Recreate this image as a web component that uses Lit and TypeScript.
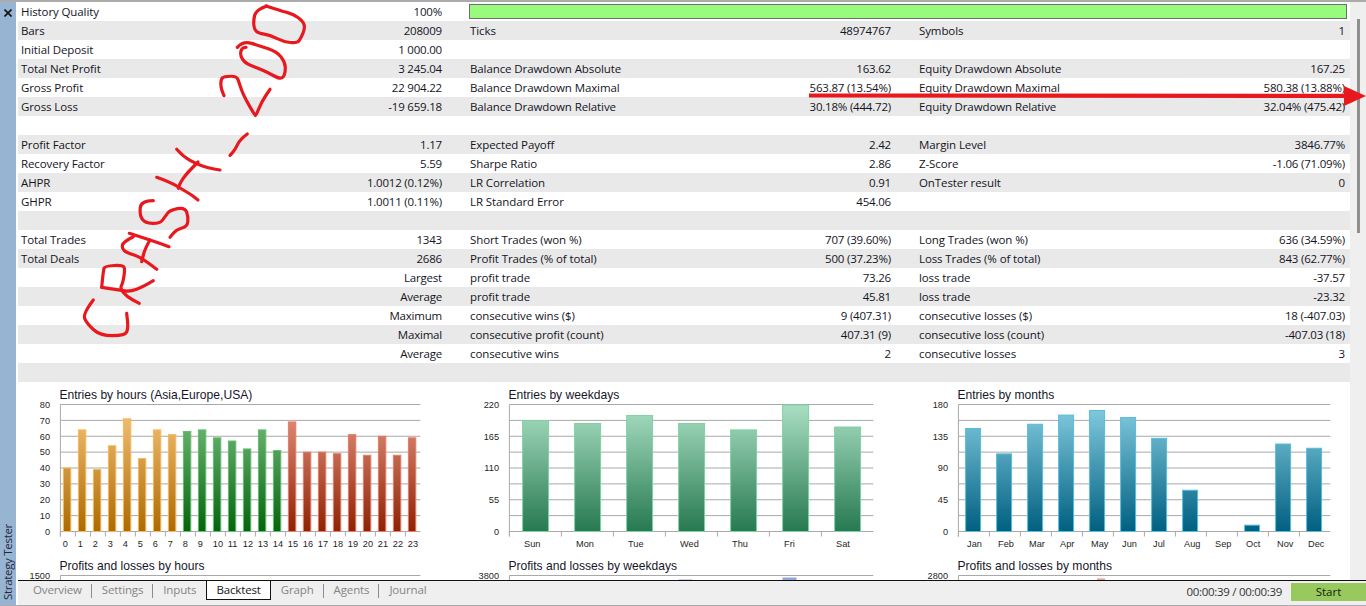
import { LitElement, html, css, svg } from "lit";
import { customElement } from "lit/decorators.js";

type Cell = [string, string];
const E: Cell = ["", ""];
const ROWS: Cell[][] = [
  [["History Quality", "100%"]],
  [["Bars", "208009"], ["Ticks", "48974767"], ["Symbols", "1"]],
  [["Initial Deposit", "1 000.00"], E, E],
  [["Total Net Profit", "3 245.04"], ["Balance Drawdown Absolute", "163.62"], ["Equity Drawdown Absolute", "167.25"]],
  [["Gross Profit", "22 904.22"], ["Balance Drawdown Maximal", "563.87 (13.54%)"], ["Equity Drawdown Maximal", "580.38 (13.88%)"]],
  [["Gross Loss", "-19 659.18"], ["Balance Drawdown Relative", "30.18% (444.72)"], ["Equity Drawdown Relative", "32.04% (475.42)"]],
  [E, E, E],
  [["Profit Factor", "1.17"], ["Expected Payoff", "2.42"], ["Margin Level", "3846.77%"]],
  [["Recovery Factor", "5.59"], ["Sharpe Ratio", "2.86"], ["Z-Score", "-1.06 (71.09%)"]],
  [["AHPR", "1.0012 (0.12%)"], ["LR Correlation", "0.91"], ["OnTester result", "0"]],
  [["GHPR", "1.0011 (0.11%)"], ["LR Standard Error", "454.06"], E],
  [E, E, E],
  [["Total Trades", "1343"], ["Short Trades (won %)", "707 (39.60%)"], ["Long Trades (won %)", "636 (34.59%)"]],
  [["Total Deals", "2686"], ["Profit Trades (% of total)", "500 (37.23%)"], ["Loss Trades (% of total)", "843 (62.77%)"]],
  [["", "Largest"], ["profit trade", "73.26"], ["loss trade", "-37.57"]],
  [["", "Average"], ["profit trade", "45.81"], ["loss trade", "-23.32"]],
  [["", "Maximum"], ["consecutive wins ($)", "9 (407.31)"], ["consecutive losses ($)", "18 (-407.03)"]],
  [["", "Maximal"], ["consecutive profit (count)", "407.31 (9)"], ["consecutive loss (count)", "-407.03 (18)"]],
  [["", "Average"], ["consecutive wins", "2"], ["consecutive losses", "3"]],
  [E, E, E],
];

interface Tone { top: string; bottom: string; edge: string }
const ORANGE: Tone = { top: "#f6c57c", bottom: "#ad6a00", edge: "#f8b75a" };
const GREEN: Tone = { top: "#7cc184", bottom: "#05640c", edge: "#63bd72" };
const RED: Tone = { top: "#e59683", bottom: "#8e2204", edge: "#e87a66" };
const SEA: Tone = { top: "#aadfc4", bottom: "#267950", edge: "#7fd2a4" };
const TEAL: Tone = { top: "#85cde0", bottom: "#005f80", edge: "#55bedc" };

interface Chart {
  title: string; title2: string; ymax: number; ymax2: string; labels: (string | number)[];
  steps: (string | null)[]; values: number[]; width: number; barW: number; barX: number; labelX: number; tone: (i: number) => Tone;
  stubs: { x: number; w: number; y: number; fill: string }[];
}

const CHARTS: Chart[] = [
  {
    title: "Entries by hours (Asia,Europe,USA)", title2: "Profits and losses by hours", ymax: 80, ymax2: "1500",
    labels: Array.from({ length: 24 }, (_, i) => i),
    steps: ["80", "70", "60", "50", "40", "30", "20", "10", "0"],
    values: [40, 64, 39, 54, 71, 46, 64, 61, 63, 64, 59, 57, 52, 64, 51, 69, 50, 50, 49, 61, 48, 60, 48, 59],
    width: 15, barW: 7.4, barX: 3, labelX: 2.4,
    tone: (i) => (i < 8 ? ORANGE : i < 15 ? GREEN : RED), stubs: [],
  },
  {
    title: "Entries by weekdays", title2: "Profits and losses by weekdays", ymax: 220, ymax2: "3800",
    labels: ["Sun", "Mon", "Tue", "Wed", "Thu", "Fri", "Sat"],
    steps: ["220", null, "165", null, "110", null, "55", null, "0"],
    values: [192, 187, 201, 187, 176, 219, 181],
    width: 52, barW: 26, barX: 13.2, labelX: 14.7,
    tone: () => SEA,
    stubs: [{ x: 211.5, w: 14, y: 197.5, fill: "#8fa8dc" }, { x: 315.5, w: 14, y: 195.5, fill: "#8fa8dc" }],
  },
  {
    title: "Entries by months", title2: "Profits and losses by months", ymax: 180, ymax2: "2800",
    labels: ["Jan", "Feb", "Mar", "Apr", "May", "Jun", "Jul", "Aug", "Sep", "Oct", "Nov", "Dec"],
    steps: ["180", null, "135", null, "90", null, "45", null, "0"],
    values: [146, 110, 152, 165, 171.5, 161.5, 132, 58.5, 0, 9, 124, 118],
    width: 31, barW: 15, barX: 7.2, labelX: 8.7,
    tone: () => TEAL,
    stubs: [{ x: 181, w: 8, y: 196.5, fill: "#ef9c8a" }],
  },
];

const X0 = 42.4, TOP = 22.5, BOTTOM = 149.5;

function chartSvg(c: Chart, idx: number) {
  const n = c.labels.length;
  const xEnd = X0 + c.width * n;
  const yOf = (v: number) => BOTTOM - (v / c.ymax) * (BOTTOM - TOP);
  const tones = Array.from(new Set(c.values.map((_, i) => c.tone(i))));
  const gid = (t: Tone) => `g${idx}-${tones.indexOf(t)}`;
  return svg`
    <svg class="plot" width="449" height="198" viewBox="0 0 449 198">
      <defs>
        ${tones.map((t) => svg`<linearGradient id=${gid(t)} gradientUnits="userSpaceOnUse" x1="0" x2="0" y1=${TOP} y2=${BOTTOM}>
          <stop offset="0" stop-color=${t.top}></stop><stop offset="1" stop-color=${t.bottom}></stop>
        </linearGradient>`)}
      </defs>
      <text class="title" x=${X0 - 1} y="17">${c.title}</text>
      ${c.steps.map((s, i) => {
        const y = TOP + (i * (BOTTOM - TOP)) / 8;
        return svg`<line class="grid" x1=${X0} x2=${xEnd} y1=${y} y2=${y}></line>
          ${s === null ? "" : svg`<text class="ylab" x="32" y=${y + 3.3}>${s}</text>`}`;
      })}
      <line class="grid" x1=${X0} x2=${X0} y1=${TOP} y2=${BOTTOM + 5}></line>
      ${c.labels.map((l, i) => {
        const x = X0 + c.width * i;
        return svg`<line class="grid" x1=${x} x2=${x} y1=${BOTTOM} y2=${BOTTOM + 5}></line>
          <text class="xlab" x=${x + c.labelX} y=${BOTTOM + 15}>${l}</text>`;
      })}
      ${c.values.map((v, i) => {
        if (v === 0) return "";
        const t = c.tone(i);
        const y = yOf(v);
        return svg`<rect x=${X0 + c.width * i + c.barX} y=${y} width=${c.barW} height=${BOTTOM - y}
          fill=${`url(#${gid(t)})`} stroke=${t.edge} stroke-width="1"></rect>`;
      })}
      <text class="title" x=${X0 - 1} y="188">${c.title2}</text>
      <text class="ylab" x="32" y="196.6">${c.ymax2}</text>
      <line class="grid" x1=${X0} x2=${xEnd} y1="193.5" y2="193.5"></line>
      <line class="grid" x1=${X0} x2=${X0} y1="193.5" y2="198"></line>
      ${c.stubs.map((s) => svg`<rect x=${s.x + X0 - 42.4} y=${s.y} width=${s.w} height=${198 - s.y} fill=${s.fill}></rect>`)}
    </svg>`;
}

function smooth(p: number[][]): string {
  let d = `M${p[0][0]} ${p[0][1]}`;
  for (let i = 1; i < p.length - 1; i++) {
    const mx = (p[i][0] + p[i + 1][0]) / 2;
    const my = (p[i][1] + p[i + 1][1]) / 2;
    d += ` Q${p[i][0]} ${p[i][1]} ${mx} ${my}`;
  }
  const l = p[p.length - 1];
  return d + ` L${l[0]} ${l[1]}`;
}

const STROKES: number[][][] = [
  [[266.7, 6], [256, 10], [253.5, 20], [254, 29], [258.3, 33.3], [270, 35], [283.3, 41.7], [297.3, 43.3], [301, 38], [305, 28.3], [303.3, 21.7], [293.3, 14], [283.3, 11.7], [266, 6]],
  [[237.3, 47.3], [243.3, 40.7], [260, 46], [276.7, 51.7], [285, 61.7], [285.5, 72], [283, 78], [278.3, 78.3], [268.3, 72.7], [258.3, 68.3], [245, 63.3], [240, 55], [241.7, 48.3], [246, 47.3]],
  [[224, 95.7], [220.7, 88.3], [221, 79], [224, 76.5], [236.7, 76], [239.3, 83.3], [243.3, 95], [255, 115.7], [256, 115.7], [261.7, 101.7], [270, 89.3]],
  [[247.3, 134], [240, 139.3], [235, 150], [230, 155.3]],
  [[176.7, 149.3], [183.3, 156.7], [196.7, 164], [208.3, 168], [220, 170]],
  [[198, 162], [186.7, 173.3], [180, 183], [178.3, 188.3]],
  [[156.7, 177.3], [170, 182], [185, 191], [191.7, 195], [198, 200]],
  [[153.3, 200.7], [141, 200.7], [139.5, 215], [145, 223.3], [160, 223.5], [165, 216.7], [170, 210], [185, 207.3], [188.3, 216.7], [187.3, 226.7], [176.7, 229.3], [170, 237.3]],
  [[129.3, 233.3], [150, 240], [169, 246.7]],
  [[133.3, 236.7], [123.3, 241.7], [121.7, 248.3], [126.7, 252.7], [140, 256.7], [156.7, 269.3]],
  [[150, 240], [145, 248.3], [141.7, 261.7]],
  [[101.7, 287.3], [103.3, 270], [105, 266], [123.3, 265], [125, 270], [122.7, 283.3], [120, 288.3], [126.7, 296.7], [139.3, 303.3]],
  [[101.7, 287.3], [120, 290], [130, 291.7], [143.3, 286.7], [153.3, 280.7]],
  [[93.3, 300], [82.7, 314], [86.7, 323.3], [100, 335.7], [125, 335.7], [128.3, 328.3], [126.7, 313.3]],
];

@customElement("app-root")
export class AppRoot extends LitElement {
  static styles = css`
    :host { display: block; width: 1366px; height: 606px; position: relative; overflow: hidden; background: #fff;
      font-family: "Open Sans", "Noto Sans", sans-serif; font-size: 11.5px; color: #14141e; }
    .shell { display: flex; border-top: 2px solid #ababab; border-bottom: 1px solid #ababab; box-sizing: border-box; height: 606px; }
    .side { width: 16px; flex: none; background: #97b4d3; display: flex; flex-direction: column; justify-content: space-between; align-items: center; margin-right: 2px; }
    .close { margin-top: 7px; display: block; }
    .side-label { writing-mode: vertical-rl; transform: rotate(180deg); margin-bottom: 5px; font-size: 11.5px; letter-spacing: -0.3px; line-height: 16px; color: #1e2a3a; white-space: nowrap; }
    .main { flex: 1; min-width: 0; display: flex; flex-direction: column; }
    .body { flex: 1; min-height: 0; display: flex; }
    .content { width: 1332px; flex: none; overflow: hidden; }
    .gutter { flex: 1; background: #efefef; display: flex; justify-content: center; padding-top: 17px; }
    .thumb { width: 3px; height: 214px; background: #8f8f8f; margin-left: 1px; }
    .row { display: flex; height: 19px; line-height: 20px; overflow: hidden; }
    .row:nth-child(even) { background: #e9e9e9; }
    .cell { width: 449px; flex: none; box-sizing: border-box; padding: 0 25px 0 3px; display: flex; justify-content: space-between; white-space: nowrap; letter-spacing: -0.1px; }
    .cell:nth-child(3) { width: 434px; padding-right: 5px; }
    .val { letter-spacing: -0.2px; }
    .progress { flex: 1; margin: 2px 3px 0 2px; height: 15px; box-sizing: border-box; border: 1px solid #6e6e6e; background: #98fb7e; }
    .charts { display: flex; }
    .chart { width: 449px; flex: none; height: 198px; overflow: hidden; }
    .chart:nth-child(3) { width: 434px; }
    .plot { display: block; }
    .title { font: 12.1px "Liberation Sans", Arial, sans-serif; fill: #16162a; }
    .ylab, .xlab { font: 9.2px "Liberation Sans", Arial, sans-serif; fill: #1e1e1e; }
    .ylab { text-anchor: end; }
    .grid { stroke: #a9a9a9; stroke-width: 1; }
    .tabs { height: 25px; flex: none; background: #efefef; border-top: 1px solid #111; display: flex; align-items: flex-start; box-sizing: border-box; padding-left: 5px; position: relative; z-index: 1; }
    .tab { height: 18px; line-height: 17px; padding: 0 10px; color: #858585; display: block; position: relative; letter-spacing: -0.14px; }
    .tab.sep::after { content: ""; position: absolute; right: 0; top: 3px; height: 14px; width: 1px; background: #8c8c8c; }
    .tab.active { height: 19px; background: #fff; color: #14141e; border: 1px solid #111; border-top: none; box-sizing: border-box; padding: 0 9px; }
    .clock { margin-left: auto; margin-right: 9px; color: #333; line-height: 20px; margin-top: 1px; letter-spacing: -0.3px; }
    .start { width: 75px; height: 18px; margin-top: 2px; background: #97c95f; text-align: center; line-height: 17px; color: #14240a; }
    .ink { position: absolute; left: 0; top: 0; pointer-events: none; z-index: 2; }
    .ink path { fill: none; stroke: #e8191e; stroke-width: 3.2; stroke-linecap: round; stroke-linejoin: round; }
    .ink .arrow { fill: #e8191e; stroke: none; }
  `;

  private tabs = ["Overview", "Settings", "Inputs", "Backtest", "Graph", "Agents", "Journal"];

  render() {
    return html`
      <div class="shell">
        <div class="side">
          <svg class="close" width="8" height="8" viewBox="0 0 8 8"><path d="M0.5 0.5 L7.5 7.5 M7.5 0.5 L0.5 7.5" stroke="#111" stroke-width="1.6" fill="none"></path></svg>
          <div class="side-label">Strategy Tester</div>
        </div>
        <div class="main">
          <div class="body">
            <div class="content">
              <div class="table">
                ${ROWS.map((r, i) => html`<div class="row">
                  <div class="cell"><span>${r[0][0]}</span><span class="val">${r[0][1]}</span></div>
                  ${i === 0
                    ? html`<div class="progress"></div>`
                    : html`<div class="cell"><span>${r[1][0]}</span><span class="val">${r[1][1]}</span></div>
                           <div class="cell"><span>${r[2][0]}</span><span class="val">${r[2][1]}</span></div>`}
                </div>`)}
              </div>
              <div class="charts">
                ${CHARTS.map((c, i) => html`<div class="chart">${chartSvg(c, i)}</div>`)}
              </div>
            </div>
            <div class="gutter"><div class="thumb"></div></div>
          </div>
          <div class="tabs">
            ${this.tabs.map((t, i) => html`<span class="tab ${t === "Backtest" ? "active" : i !== 2 && i !== 6 ? "sep" : ""}">${t}</span>`)}
            <span class="clock">00:00:39 / 00:00:39</span>
            <span class="start">Start</span>
          </div>
        </div>
      </div>
      <svg class="ink" width="1366" height="606" viewBox="0 0 1366 606">
        ${STROKES.map((s) => svg`<path d=${smooth(s)}></path>`)}
        <path class="arrow" d="M809 93.5 L1344 93.7 L1344 86 L1366 96 L1344 106 L1344 98 L809 97.5 Z"></path>
      </svg>
    `;
  }
}
